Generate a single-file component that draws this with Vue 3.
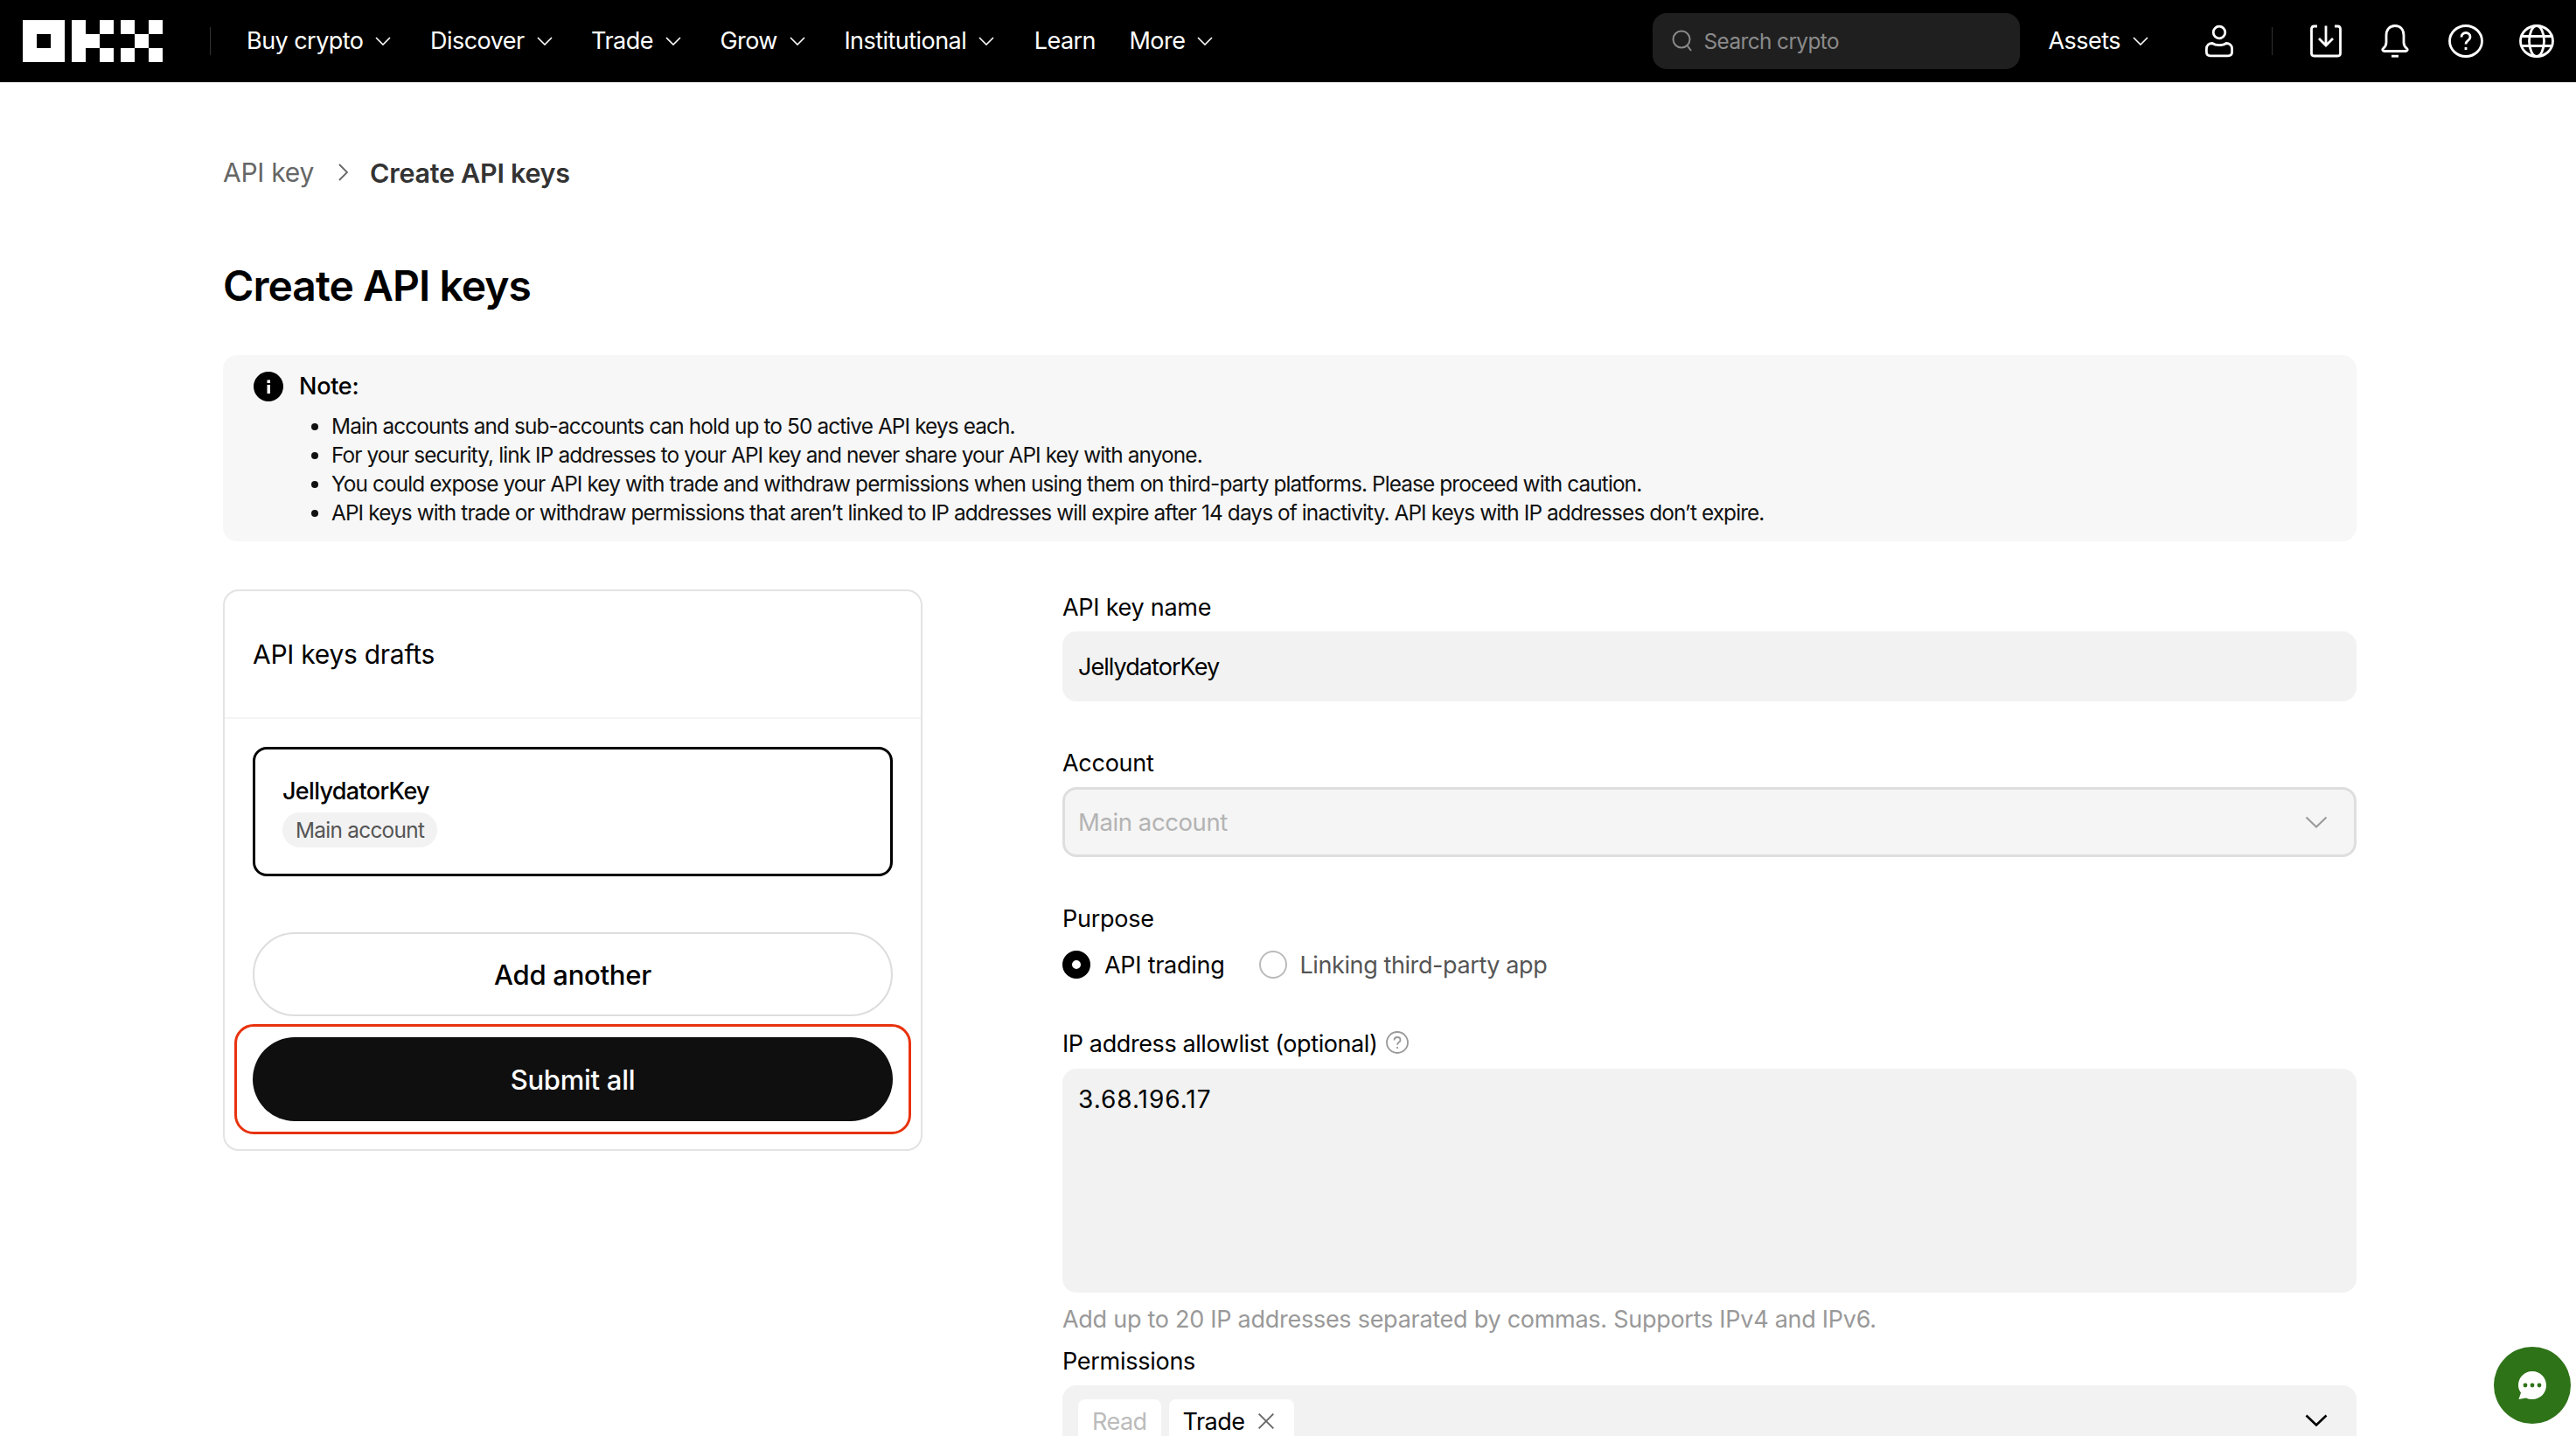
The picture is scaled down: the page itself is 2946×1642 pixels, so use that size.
<script setup>
const navItems = [
  { label: 'Buy crypto', caret: true },
  { label: 'Discover', caret: true },
  { label: 'Trade', caret: true },
  { label: 'Grow', caret: true },
  { label: 'Institutional', caret: true },
  { label: 'Learn', caret: false },
  { label: 'More', caret: true }
]

const notes = [
  'Main accounts and sub-accounts can hold up to 50 active API keys each.',
  'For your security, link IP addresses to your API key and never share your API key with anyone.',
  'You could expose your API key with trade and withdraw permissions when using them on third-party platforms. Please proceed with caution.',
  'API keys with trade or withdraw permissions that aren’t linked to IP addresses will expire after 14 days of inactivity. API keys with IP addresses don’t expire.'
]
</script>

<template>
  <div class="page">
    <header class="topbar">
      <svg class="logo" viewBox="0 0 160 48" fill="#fff">
        <path fill-rule="evenodd" d="M0 0h48v48H0zM16 16v16h16V16z" />
        <rect x="56" y="0" width="16" height="48" />
        <rect x="72" y="16" width="16" height="16" />
        <rect x="88" y="0" width="16" height="16" />
        <rect x="88" y="32" width="16" height="16" />
        <rect x="112" y="0" width="16" height="16" />
        <rect x="144" y="0" width="16" height="16" />
        <rect x="128" y="16" width="16" height="16" />
        <rect x="112" y="32" width="16" height="16" />
        <rect x="144" y="32" width="16" height="16" />
      </svg>
      <span class="topbar-sep"></span>
      <nav class="nav">
        <a
          v-for="item in navItems"
          :key="item.label"
          class="nav-item"
          :class="{ 'nav-plain': !item.caret }"
        >
          {{ item.label }}
          <svg v-if="item.caret" class="caret" viewBox="0 0 18 10" fill="none">
            <path d="M1 1l8 8 8-8" />
          </svg>
        </a>
      </nav>

      <div class="search">
        <svg class="search-icon" viewBox="0 0 24 26" fill="none">
          <circle cx="11" cy="11" r="9.5" />
          <path d="M17.5 18l4.5 6" />
        </svg>
        <span>Search crypto</span>
      </div>

      <a class="nav-item assets">
        Assets
        <svg class="caret" viewBox="0 0 18 10" fill="none">
          <path d="M1 1l8 8 8-8" />
        </svg>
      </a>

      <svg class="top-icon user" viewBox="0 0 32 36" fill="none">
        <circle cx="16" cy="8" r="6.8" />
        <path d="M8 20.5c2 1.4 4.6 2.2 8 2.200s6-.8 8-2.200c3.500 0 6.600 2 6.600 6.500v3.500c0 2.800-1.800 4.300-4.600 4.300H6c-2.800 0-4.600-1.500-4.600-4.300V27c0-4.500 3.100-6.500 6.600-6.500z" />
      </svg>
      <span class="topbar-sep sep-right"></span>
      <svg class="top-icon download" viewBox="0 0 36 37" fill="none">
        <path d="M8 1.500H4.500C2.500 1.500 1.500 2.500 1.500 4.500v28c0 2 1 3 3 3h27c2 0 3-1 3-3v-28c0-2-1-3-3-3H28" />
        <path d="M18 1v22M10 15.500l8 8 8-8" />
      </svg>
      <svg class="top-icon bell" viewBox="0 0 32 38" fill="none">
        <path d="M16 1.500c-6.500 0-10 4.700-10 11v8c0 3-1.200 5-3.400 6.800-1.500 1.200-.8 3.200 1.100 3.200h24.600c1.900 0 2.600-2 1.100-3.200C27.200 25.500 26 23.500 26 20.500v-8c0-6.300-3.500-11-10-11z" />
        <path d="M12 36.200h8" />
      </svg>
      <svg class="top-icon help" viewBox="0 0 40 38" fill="none">
        <ellipse cx="20" cy="19" rx="18.500" ry="17.500" />
        <path d="M15 14.500c0-3 2.200-5 5-5s5 2 5 4.700c0 2.300-1.300 3.300-2.800 4.400-1.500 1.100-2.200 2-2.200 3.900" />
        <path d="M20 26v3" />
      </svg>
      <svg class="top-icon globe" viewBox="0 0 40 38" fill="none">
        <ellipse cx="20" cy="19" rx="18.500" ry="17.500" />
        <ellipse cx="20" cy="19" rx="8.500" ry="17.500" />
        <path d="M2 13.500h36M2 24.500h36" />
      </svg>
    </header>

    <main class="main">
      <div class="crumbs">
        <span class="crumb-link">API key</span>
        <svg class="crumb-arrow" viewBox="0 0 11 20" fill="none">
          <path d="M1 1l9 9-9 9" />
        </svg>
        <span class="crumb-current">Create API keys</span>
      </div>

      <h1 class="title">Create API keys</h1>

      <section class="note">
        <div class="note-head">
          <svg class="note-icon" viewBox="0 0 34 34">
            <circle cx="17" cy="17" r="17" fill="#000" />
            <rect x="15.500" y="15" width="3.500" height="10" fill="#fff" />
            <rect x="15.500" y="9.500" width="3.500" height="3.500" fill="#fff" />
          </svg>
          <span>Note:</span>
        </div>
        <ul class="note-list">
          <li v-for="line in notes" :key="line">{{ line }}</li>
        </ul>
      </section>

      <div class="columns">
        <aside class="drafts">
          <div class="drafts-head">API keys drafts</div>
          <div class="drafts-body">
            <div class="draft-item">
              <div class="draft-name">JellydatorKey</div>
              <span class="draft-tag">Main account</span>
            </div>
            <button type="button" class="btn btn-outline">Add another</button>
            <div class="submit-wrap">
              <button type="button" class="btn btn-primary">Submit all</button>
              <span class="highlight"></span>
            </div>
          </div>
        </aside>

        <form class="form">
          <label class="field-label">API key name</label>
          <div class="input input-name">JellydatorKey</div>

          <label class="field-label gap-top">Account</label>
          <div class="input input-disabled">
            Main account
            <svg class="select-caret muted" viewBox="0 0 26 14" fill="none">
              <path d="M1.500 1.500L13 12.500 24.500 1.500" />
            </svg>
          </div>

          <label class="field-label gap-top">Purpose</label>
          <div class="radios">
            <span class="radio radio-on"></span>
            <span class="radio-text">API trading</span>
            <span class="radio"></span>
            <span class="radio-text radio-text-off">Linking third-party app</span>
          </div>

          <label class="field-label ip-label">
            IP address allowlist (optional)
            <svg class="hint-icon" viewBox="0 0 26 26" fill="none">
              <circle cx="13" cy="13" r="12" />
              <path d="M9.500 10.500c0-2 1.500-3.500 3.500-3.500s3.500 1.400 3.500 3.200c0 1.500-.9 2.200-1.900 2.900-1 .7-1.600 1.300-1.600 2.600" />
              <path d="M13 18v2" />
            </svg>
          </label>
          <div class="textarea">3.68.196.17</div>
          <p class="hint">Add up to 20 IP addresses separated by commas. Supports IPv4 and IPv6.</p>

          <label class="field-label perm-label">Permissions</label>
          <div class="perm-select">
            <span class="perm-tag perm-tag-locked">Read</span>
            <span class="perm-tag perm-tag-trade">
              Trade
              <svg class="perm-x" viewBox="0 0 18 18" fill="none">
                <path d="M1.500 1.500l15 15M16.500 1.500l-15 15" />
              </svg>
            </span>
            <svg class="select-caret" viewBox="0 0 26 14" fill="none">
              <path d="M1.500 1.500L13 12.500 24.500 1.500" />
            </svg>
          </div>
        </form>
      </div>
    </main>

    <button type="button" class="chat">
      <svg viewBox="0 0 34 34" width="34" height="34">
        <path d="M17 1c9 0 16 7 16 16s-7 16-16 16c-2.500 0-5-.6-7-1.600L1.500 33 4 25.500C2 23 1 20 1 17 1 8 8 1 17 1z" fill="#fff" />
        <circle cx="9" cy="17" r="2.400" fill="#2e7318" />
        <circle cx="17" cy="17" r="2.400" fill="#2e7318" />
        <circle cx="25" cy="17" r="2.400" fill="#2e7318" />
      </svg>
    </button>
  </div>
</template>

<style>
html,
body {
  margin: 0;
  background: #fff;
}
</style>

<style scoped>
.page {
  position: relative;
  height: 100vh;
  overflow: hidden;
  background: #fff;
  color: #000;
  font-family: Inter, "Liberation Sans", sans-serif;
  font-size: 27px;
  letter-spacing: -0.01em;
}

.topbar {
  display: flex;
  align-items: center;
  height: 94px;
  padding-left: 26px;
  background: #000;
  color: #fff;
}

.logo {
  width: 160px;
  height: 48px;
  flex: none;
}

.topbar-sep {
  width: 1px;
  height: 32px;
  margin: 0 41px 0 54px;
  background: #333;
  flex: none;
}

.nav {
  display: flex;
  align-items: center;
  gap: 44.500px;
}

.nav-item {
  display: flex;
  align-items: center;
  gap: 14px;
  line-height: 36px;
  letter-spacing: -0.02em;
  white-space: nowrap;
}

.nav-plain {
  margin: 0 -6px 0 1px;
}

.caret {
  width: 18px;
  height: 10px;
  stroke: #fff;
  stroke-width: 1.6;
}

.search {
  display: flex;
  align-items: center;
  gap: 13px;
  width: 420px;
  height: 64px;
  margin-left: auto;
  padding-left: 22px;
  box-sizing: border-box;
  border-radius: 16px;
  background: #1f1f1f;
  color: #8a8a8a;
  font-size: 24.400px;
  letter-spacing: -0.025em;
}

.search-icon {
  width: 24px;
  height: 26px;
  stroke: #8a8a8a;
  stroke-width: 2;
}

.assets {
  margin-left: 33px;
}

.top-icon {
  height: 38px;
  stroke: #fff;
  stroke-width: 2.800;
  flex: none;
}

.user {
  width: 32px;
  margin-left: 65px;
}

.sep-right {
  margin: 0 43px 0 44px;
}

.download {
  width: 36px;
}

.bell {
  width: 32px;
  margin-left: 45px;
}

.help {
  width: 40px;
  margin-left: 45px;
}

.globe {
  width: 40px;
  margin: 0 25px 0 41px;
}

.main {
  padding: 83px 251px 0 255px;
}

.crumbs {
  display: flex;
  align-items: center;
  height: 40px;
  font-size: 30px;
}

.crumb-link {
  color: #666;
}

.crumb-arrow {
  width: 11px;
  height: 20px;
  margin: 0 25px 0 28px;
  stroke: #666;
  stroke-width: 1.800;
}

.crumb-current {
  color: #333;
  font-size: 30.500px;
  font-weight: 600;
}

.title {
  margin: 80px 0 49px;
  font-size: 48px;
  font-weight: 600;
  line-height: 60px;
  letter-spacing: -0.02em;
}

.note {
  height: 213px;
  box-sizing: border-box;
  padding: 19px 35px 15px;
  border-radius: 16px;
  background: #f7f7f7;
}

.note-head {
  display: flex;
  align-items: center;
  gap: 18px;
  height: 33px;
  font-weight: 500;
}

.note-icon {
  width: 34px;
  height: 34px;
}

.note-list {
  margin: 13px 0 0;
  padding: 0 0 0 89px;
  font-size: 24.400px;
  line-height: 33px;
  letter-spacing: -0.037em;
  color: #111;
}

.columns {
  display: flex;
  align-items: flex-start;
  margin-top: 55px;
}

.drafts {
  width: 800px;
  flex: none;
  box-sizing: border-box;
  border: 2px solid #e3e3e3;
  border-radius: 18px;
}

.drafts-head {
  height: 146px;
  box-sizing: border-box;
  display: flex;
  align-items: center;
  padding-left: 32px;
  border-bottom: 2px solid #f5f5f5;
  font-size: 30px;
}

.drafts-body {
  padding: 32px 32px 32px;
}

.draft-item {
  height: 148px;
  box-sizing: border-box;
  padding: 30px 31px 0;
  border: 3px solid #000;
  border-radius: 16px;
}

.draft-name {
  font-size: 27px;
  font-weight: 500;
  line-height: 36px;
  letter-spacing: -0.025em;
}

.draft-tag {
  display: inline-block;
  margin-top: 6px;
  padding: 0 15px;
  border-radius: 20px;
  background: #f2f2f2;
  color: #555;
  font-size: 24.400px;
  line-height: 40px;
  letter-spacing: -0.03em;
}

.btn {
  display: block;
  width: 100%;
  height: 96px;
  border-radius: 48px;
  font-family: inherit;
  font-size: 31px;
  font-weight: 500;
  letter-spacing: inherit;
}

.btn-outline {
  margin-top: 64px;
  border: 2px solid #ddd;
  background: #fff;
  color: #000;
}

.submit-wrap {
  position: relative;
  margin-top: 24px;
}

.btn-primary {
  border: 0;
  background: #0f0f0f;
  color: #fff;
}

.highlight {
  position: absolute;
  inset: -15px -21px;
  border: 3px solid #e8320e;
  border-radius: 22px;
  pointer-events: none;
}

.form {
  flex: 1;
  margin-left: 160px;
  padding-top: 3px;
}

.field-label {
  display: block;
  line-height: 36px;
}

.gap-top {
  margin-top: 53px;
}

.input {
  position: relative;
  display: flex;
  align-items: center;
  height: 80px;
  margin-top: 9px;
  padding: 0 18px;
  box-sizing: border-box;
  border-radius: 16px;
  background: #f2f2f2;
  font-size: 27px;
}

.input-name {
  letter-spacing: -0.035em;
}

.input-disabled {
  border: 3px solid #dedede;
  padding: 0 15px;
  background: #f5f5f5;
  color: #b3b3b3;
  font-size: 27.500px;
  letter-spacing: -0.015em;
}

.select-caret {
  position: absolute;
  right: 33px;
  top: 33px;
  width: 26px;
  height: 14px;
  stroke: #000;
  stroke-width: 2.600;
}

.select-caret.muted {
  right: 30px;
  top: 30px;
  stroke: #999;
  stroke-width: 2;
}

.radios {
  display: flex;
  align-items: center;
  height: 36px;
  margin-top: 16px;
}

.radio {
  width: 32px;
  height: 32px;
  box-sizing: border-box;
  border: 2px solid #bbb;
  border-radius: 50%;
}

.radio-on {
  border: 11px solid #000;
}

.radio-text {
  margin: 0 39px 0 16px;
}

.radio-text-off {
  margin-left: 15px;
  color: #555;
  letter-spacing: -0.015em;
}

.ip-label {
  display: flex;
  align-items: center;
  gap: 10px;
  margin-top: 55px;
  letter-spacing: -0.015em;
}

.hint-icon {
  width: 26px;
  height: 26px;
  margin-top: -4px;
  stroke: #999;
  stroke-width: 1.800;
}

.textarea {
  height: 256px;
  margin-top: 10px;
  padding: 17px 18px 0;
  box-sizing: border-box;
  border-radius: 16px;
  background: #f2f2f2;
  font-size: 28px;
  line-height: 36px;
  letter-spacing: 0.035em;
}

.hint {
  margin: 13px 0 0;
  color: #999;
  line-height: 36px;
}

.perm-label {
  margin-top: 12px;
}

.perm-select {
  position: relative;
  display: flex;
  gap: 9px;
  height: 90px;
  margin-top: 9px;
  padding: 16px 18px 0;
  box-sizing: border-box;
  border-radius: 16px;
  background: #f2f2f2;
}

.perm-tag {
  display: flex;
  align-items: center;
  gap: 15px;
  height: 50px;
  padding: 0 16px;
  border-radius: 8px;
  background: #fff;
  font-size: 27px;
  letter-spacing: -0.02em;
}

.perm-tag-trade {
  padding-right: 22px;
}

.perm-tag-locked {
  color: #bbb;
}

.perm-x {
  width: 20px;
  height: 20px;
  stroke: #666;
  stroke-width: 1.700;
}

.chat {
  position: absolute;
  right: 6px;
  bottom: 14px;
  display: flex;
  align-items: center;
  justify-content: center;
  width: 88px;
  height: 88px;
  padding: 0;
  border: 0;
  border-radius: 50%;
  background: #2e7318;
}
</style>
